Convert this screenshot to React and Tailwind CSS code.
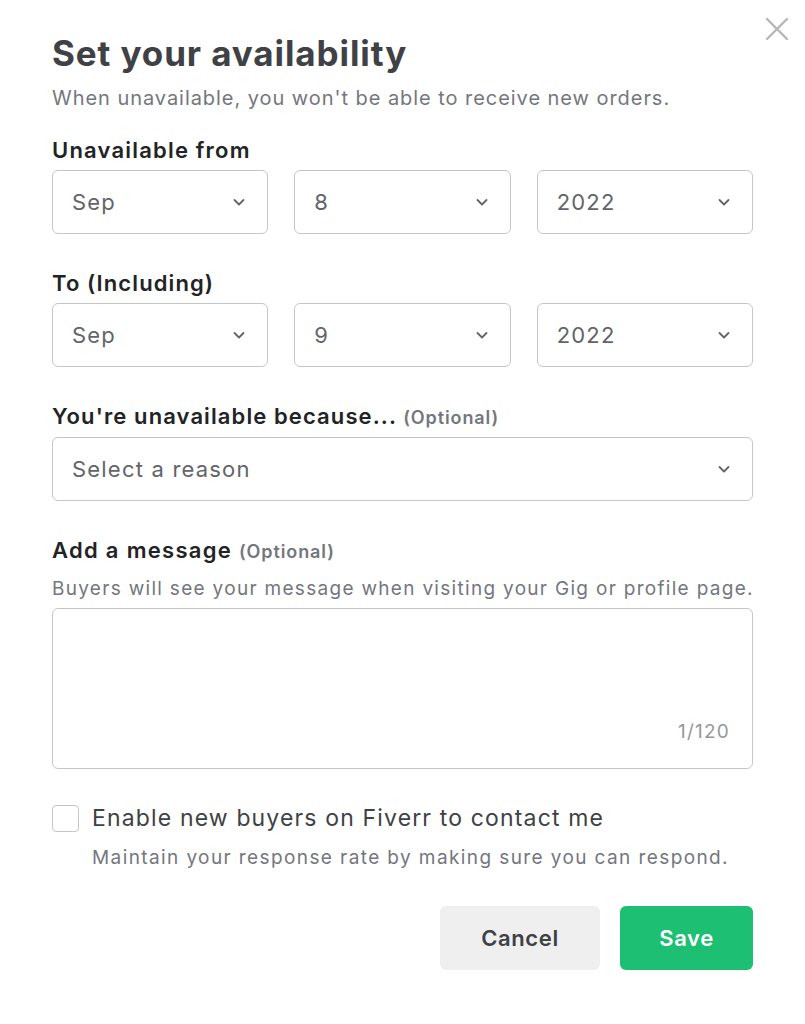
import React from "react";

function Chevron() {
  return (
    <svg width="16" height="16" viewBox="0 0 16 16" fill="none" className="shrink-0">
      <path d="M3.5 6l4.5 4.5L12.5 6" stroke="#62646a" strokeWidth="1.8" strokeLinecap="round" strokeLinejoin="round" />
    </svg>
  );
}

function Select({ value, className = "" }) {
  return (
    <div className={"h-[64px] border border-[#c5c6c9] rounded-[6px] flex items-center justify-between pl-[19px] pr-[20px] bg-white " + className}>
      <span className="text-[22px] text-[#62646a] tracking-[1.2px]">{value}</span>
      <Chevron />
    </div>
  );
}

export default function App() {
  return (
    <div className="w-[805px] h-[1024px] bg-white relative" style={{ fontFamily: "Inter, 'Open Sans', 'Liberation Sans', sans-serif" }}>
      <button className="absolute right-[15px] top-[16px] w-[26px] h-[26px] flex items-center justify-center">
        <svg width="24" height="24" viewBox="0 0 24 24" fill="none">
          <path d="M2 2l20 20M22 2L2 22" stroke="#b5b6ba" strokeWidth="2.4" strokeLinecap="round" />
        </svg>
      </button>
      <div className="px-[52px] pt-[30px] flex flex-col">
        <h1 className="text-[35px] leading-[46px] font-bold text-[#404145] tracking-[0.9px]">Set your availability</h1>
        <p className="text-[20px] leading-[28px] text-[#74767e] mt-[8px] tracking-[0.95px] whitespace-nowrap">When unavailable, you won't be able to receive new orders.</p>

        <label className="text-[22px] leading-[30px] font-semibold text-[#222325] mt-[23px] tracking-[1.2px]">Unavailable from</label>
        <div className="grid grid-cols-3 gap-[26px] mt-[5px]">
          <Select value="Sep" />
          <Select value="8" />
          <Select value="2022" />
        </div>

        <label className="text-[22px] leading-[30px] font-semibold text-[#222325] mt-[34px] tracking-[1.1px]">To (Including)</label>
        <div className="grid grid-cols-3 gap-[26px] mt-[5px]">
          <Select value="Sep" />
          <Select value="9" />
          <Select value="2022" />
        </div>

        <label className="text-[22px] leading-[30px] font-semibold text-[#222325] mt-[34px] tracking-[1.1px] whitespace-nowrap">
          You're unavailable because... <span className="text-[18px] font-semibold text-[#74767e] tracking-[0.9px]">(Optional)</span>
        </label>
        <Select value="Select a reason" className="mt-[4px]" />

        <label className="text-[22px] leading-[30px] font-semibold text-[#222325] mt-[34px] tracking-[1.3px]">
          Add a message <span className="text-[18px] font-semibold text-[#74767e] tracking-[0.9px]">(Optional)</span>
        </label>
        <p className="text-[19px] leading-[28px] text-[#74767e] mt-[8px] whitespace-nowrap tracking-[1.3px]">Buyers will see your message when visiting your Gig or profile page.</p>
        <div className="h-[161px] border border-[#c5c6c9] rounded-[6px] mt-[5px] flex items-end justify-end pr-[22px] pb-[22px]">
          <span className="text-[19px] text-[#95979d] tracking-[1.2px]">1/120</span>
        </div>

        <div className="flex items-start gap-[13px] mt-[36px]">
          <div className="w-[27px] h-[27px] border border-[#c5c6c9] rounded-[4px] shrink-0"></div>
          <div className="flex flex-col">
            <span className="text-[23px] leading-[26px] text-[#404145] tracking-[1.15px] whitespace-nowrap">Enable new buyers on Fiverr to contact me</span>
            <span className="text-[19px] leading-[28px] text-[#74767e] mt-[13px] whitespace-nowrap tracking-[1.4px]">Maintain your response rate by making sure you can respond.</span>
          </div>
        </div>

        <div className="flex justify-end gap-[20px] mt-[34px]">
          <button className="w-[160px] h-[64px] rounded-[6px] bg-[#efeff0] text-[#404145] text-[22px] font-semibold tracking-[0.6px]">Cancel</button>
          <button className="w-[133px] h-[64px] rounded-[6px] bg-[#1dbf73] text-white text-[22px] font-semibold tracking-[0.6px]">Save</button>
        </div>
      </div>
    </div>
  );
}
